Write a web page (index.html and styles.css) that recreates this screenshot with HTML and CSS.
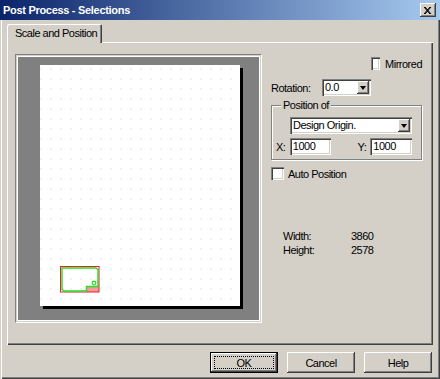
FILE: index.html
```html
<!DOCTYPE html>
<html lang="en">
<head>
    <meta charset="UTF-8">
    <title>Post Process - Selections</title>
    <link rel="stylesheet" href="styles.css">
</head>
<body>
    <div class="window">
        <div class="titlebar">
            <span class="title">Post Process - Selections</span>
            <span class="close-btn">
                <svg width="8" height="7" viewBox="0 0 8 7">
                    <path d="M0 0 L6 7 M1 0 L7 7 M6 0 L0 7 M7 0 L1 7" stroke="#000" stroke-width="1" fill="none"/>
                </svg>
            </span>
        </div>

        <div class="client">
            <div class="tabstrip">
                <div class="tab active">Scale and Position</div>
            </div>

            <div class="tabpanel">
                <!-- preview of the board on the sheet -->
                <div class="preview">
                    <div class="preview-well">
                        <div class="sheet">
                            <svg class="board" width="40" height="27" viewBox="0 0 40 27">
                                <rect x="26" y="20" width="13" height="6" fill="#f59a9a"/>
                                <rect x="0.5" y="0.5" width="38.5" height="25.5" fill="none" stroke="#e8202a" stroke-width="1"/>
                                <path d="M2 2 H36 L38 3.5 V20.5 H26.5 V25 H4 L2 23.5 Z" fill="none" stroke="#22dd22" stroke-width="1.4"/>
                                <circle cx="34" cy="17" r="1.8" fill="none" stroke="#22dd22" stroke-width="1.2"/>
                            </svg>
                        </div>
                    </div>
                </div>

                <div class="settings">
                    <label class="check mirrored"><span class="box"></span>Mirrored</label>

                    <div class="rotation-row">
                        <span class="rot-label">Rotation:</span>
                        <div class="combo rot-combo">
                            <span class="combo-text">0.0</span>
                            <span class="combo-btn"><span class="arrow"></span></span>
                        </div>
                    </div>

                    <fieldset class="group">
                        <legend>Position of</legend>
                        <div class="combo origin-combo">
                            <span class="combo-text">Design Origin.</span>
                            <span class="combo-btn"><span class="arrow"></span></span>
                        </div>
                        <div class="xy-row">
                            <span class="x-label">X:</span>
                            <span class="field">1000</span>
                            <span class="y-label">Y:</span>
                            <span class="field">1000</span>
                        </div>
                    </fieldset>

                    <label class="check auto"><span class="box"></span>Auto Position</label>

                    <div class="dims">
                        <span>Width:</span><span>3860</span>
                        <span>Height:</span><span>2578</span>
                    </div>
                </div>
            </div>

            <div class="button-row">
                <button class="btn default"><span class="focus">OK</span></button>
                <button class="btn">Cancel</button>
                <button class="btn">Help</button>
            </div>
        </div>
    </div>
</body>
</html>
```

FILE: styles.css
```css
* {
    box-sizing: border-box;
}
body {
    margin: 0;
    background: #d4d0c8;
    font: 11px "Liberation Sans", Arial, sans-serif;
    letter-spacing: -0.5px;
    color: #000;
}
.window {
    width: 440px;
    height: 379px;
    display: flex;
    flex-direction: column;
    background: #d4d0c8;
}
.titlebar {
    height: 20px;
    display: flex;
    align-items: center;
    justify-content: space-between;
    padding: 0 4px 0 3px;
    background: linear-gradient(to right, #0a246a, #a6caf0);
}
.title {
    color: #fff;
    font-weight: bold;
    letter-spacing: -0.3px;
}
.close-btn {
    width: 16px;
    height: 14px;
    display: flex;
    align-items: center;
    justify-content: center;
    background: #d4d0c8;
    box-shadow: inset -1px -1px #404040, inset 1px 1px #fff, inset -2px -2px #808080;
}
.client {
    flex: 1;
    display: flex;
    flex-direction: column;
    box-shadow: inset 1px 0 #d4d0c8, inset 2px 0 #fff, inset -1px -1px #404040, inset -2px -2px #808080;
}
.tabstrip {
    display: flex;
    padding: 4px 0 0 7px;
    margin-bottom: -1px;
}
.tab {
    position: relative;
    z-index: 1;
    width: 95px;
    height: 19px;
    padding: 3px 0 0 8px;
    background: #d4d0c8;
    border-radius: 2px 2px 0 0;
    box-shadow: inset 1px 1px #fff, inset -1px 0 #404040, inset -2px 0 #808080;
}
.tabpanel {
    height: 303px;
    margin: 0 7px 0 7px;
    display: flex;
    padding: 12px 11px 0 8px;
    box-shadow: inset 1px 1px #fff, inset -1px -1px #404040, inset -2px -2px #808080;
}
.preview {
    width: 248px;
    height: 269px;
    padding: 1px;
    border: 1px solid;
    border-color: #808080 #fff #fff #808080;
}
.preview-well {
    height: 100%;
    background: #808080;
    border: 1px solid #fff;
    padding: 8px 0 0 22px;
}
.sheet {
    width: 200px;
    height: 241px;
    padding: 201px 0 0 20px;
    background-color: #fff;
    background-image: radial-gradient(circle, #f5f1e8 0.9px, transparent 1.3px);
    background-size: 10px 10px;
    background-position: 6px -1px;
    box-shadow: 3px 3px 0 #000;
}
.board {
    display: block;
}
.settings {
    width: 151px;
    margin-left: 9px;
    display: flex;
    flex-direction: column;
}
.check {
    display: flex;
    align-items: center;
    height: 13px;
}
.box {
    width: 13px;
    height: 13px;
    margin-right: 5px;
    background: #fff;
    box-shadow: inset 1px 1px #808080, inset 2px 2px #404040, inset -1px -1px #fff, inset -2px -2px #d4d0c8;
}
.mirrored {
    margin: 3px 0 0 100px;
}
.auto {
    margin-top: 7px;
}
.auto .box {
    margin-right: 4px;
}
.rotation-row {
    display: flex;
    align-items: center;
    margin-top: 9px;
    height: 17px;
}
.rot-label {
    width: 51px;
}
.combo {
    display: flex;
    align-items: stretch;
    height: 17px;
    padding: 2px;
    background: #fff;
    box-shadow: inset 1px 1px #808080, inset 2px 2px #404040, inset -1px -1px #fff, inset -2px -2px #d4d0c8;
}
.combo-text {
    flex: 1;
    padding-left: 1px;
    line-height: 13px;
}
.combo-btn {
    width: 12px;
    display: flex;
    align-items: center;
    justify-content: center;
    background: #d4d0c8;
    box-shadow: inset -1px -1px #404040, inset 1px 1px #fff, inset -2px -2px #808080;
}
.arrow {
    width: 0;
    height: 0;
    border-left: 3.5px solid transparent;
    border-right: 3.5px solid transparent;
    border-top: 4px solid #000;
}
.rot-combo {
    width: 49px;
}
.group {
    margin: 3px 0 0 0;
    padding: 0 9px 4px 4px;
    border: 1px solid #808080;
    box-shadow: 1px 1px 0 #fff, inset 1px 1px 0 #fff;
    min-width: 0;
}
.group legend {
    margin-left: 5px;
    padding: 0 2px;
    line-height: 12px;
    background: #d4d0c8;
}
.origin-combo {
    margin: 6px 0 0 14px;
    width: 122px;
}
.xy-row {
    display: flex;
    align-items: center;
    margin-top: 4px;
    height: 17px;
}
.x-label {
    width: 14px;
}
.y-label {
    width: 13px;
    margin-left: 26px;
}
.field {
    width: 42px;
    height: 17px;
    padding: 2px 0 0 3px;
    background: #fff;
    line-height: 13px;
    box-shadow: inset 1px 1px #808080, inset 2px 2px #404040, inset -1px -1px #fff, inset -2px -2px #d4d0c8;
}
.dims {
    display: grid;
    grid-template-columns: 68px auto;
    margin: 49px 0 0 12px;
    line-height: 14px;
}
.button-row {
    display: flex;
    justify-content: flex-end;
    gap: 9px;
    margin-top: 7px;
    padding-right: 8px;
}
.btn {
    width: 68px;
    height: 21px;
    padding: 0;
    border: none;
    background: #d4d0c8;
    font: inherit;
    letter-spacing: inherit;
    color: #000;
    box-shadow: inset -1px -1px #404040, inset 1px 1px #fff, inset -2px -2px #808080, inset 2px 2px #d4d0c8;
}
.btn.default {
    border: 1px solid #000;
    padding: 3px;
}
.focus {
    display: flex;
    align-items: center;
    justify-content: center;
    height: 100%;
    border: 1px dotted #000;
}
```
